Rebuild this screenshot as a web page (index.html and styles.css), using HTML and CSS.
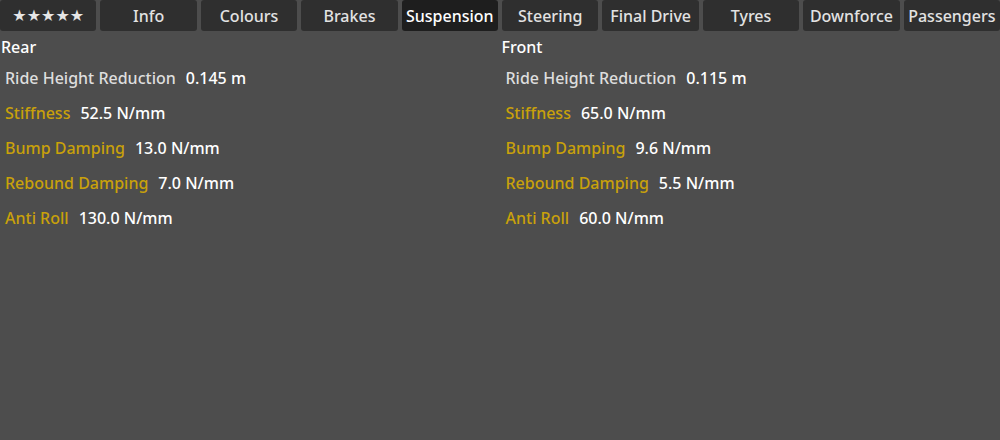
FILE: index.html
```html
<!DOCTYPE html>
<html>
<head>
<meta charset="utf-8">
<link rel="stylesheet" href="styles.css">
</head>
<body>
<div class="tabs">
  <div class="tab stars">★★★★★</div>
  <div class="tab">Info</div>
  <div class="tab">Colours</div>
  <div class="tab">Brakes</div>
  <div class="tab active">Suspension</div>
  <div class="tab">Steering</div>
  <div class="tab">Final Drive</div>
  <div class="tab">Tyres</div>
  <div class="tab">Downforce</div>
  <div class="tab">Passengers</div>
</div>
<div class="columns">
  <div class="col">
    <div class="head">Rear</div>
    <div class="rows">
      <div class="row"><span class="label plain">Ride Height Reduction</span><span class="value">0.145 m</span></div>
      <div class="row"><span class="label">Stiffness</span><span class="value">52.5 N/mm</span></div>
      <div class="row"><span class="label">Bump Damping</span><span class="value">13.0 N/mm</span></div>
      <div class="row"><span class="label">Rebound Damping</span><span class="value">7.0 N/mm</span></div>
      <div class="row"><span class="label">Anti Roll</span><span class="value">130.0 N/mm</span></div>
    </div>
  </div>
  <div class="col">
    <div class="head">Front</div>
    <div class="rows">
      <div class="row"><span class="label plain">Ride Height Reduction</span><span class="value">0.115 m</span></div>
      <div class="row"><span class="label">Stiffness</span><span class="value">65.0 N/mm</span></div>
      <div class="row"><span class="label">Bump Damping</span><span class="value">9.6 N/mm</span></div>
      <div class="row"><span class="label">Rebound Damping</span><span class="value">5.5 N/mm</span></div>
      <div class="row"><span class="label">Anti Roll</span><span class="value">60.0 N/mm</span></div>
    </div>
  </div>
</div>
</body>
</html>
```
FILE: styles.css
```css
html, body {
  margin: 0;
  padding: 0;
  background: #4d4d4d;
  font-family: "Noto Sans", "Open Sans", sans-serif;
  font-size: 16px;
  font-weight: 500;
  color: #ffffff;
}
.tabs {
  display: flex;
  gap: 4px;
  height: 31px;
}
.tab {
  flex: 1 1 0;
  min-width: 0;
  background: #2f2f2f;
  color: #e2e2e2;
  border-radius: 3px;
  display: flex;
  align-items: center;
  justify-content: center;
  white-space: nowrap;
  overflow: hidden;
  line-height: 1;
}
.tab.active {
  background: #1e1e1e;
  color: #ffffff;
}
.tab.stars {
  font-family: "DejaVu Sans", sans-serif;
  font-size: 16px;
  font-weight: 400;
  color: #e6e6e6;
}
.columns {
  display: flex;
  padding-top: 5px;
}
.col {
  flex: 1 1 0;
  padding-left: 1px;
}
.col + .col {
  padding-left: 2px;
}
.head {
  height: 22px;
  line-height: 22px;
  color: #ffffff;
}
.rows {
  padding-top: 3px;
}
.row {
  height: 35px;
  line-height: 35px;
  padding-left: 4px;
  display: flex;
  gap: 10px;
}
.label {
  color: #c9a10a;
}
.label.plain {
  color: #dedede;
}
.value {
  color: #ffffff;
}
```
